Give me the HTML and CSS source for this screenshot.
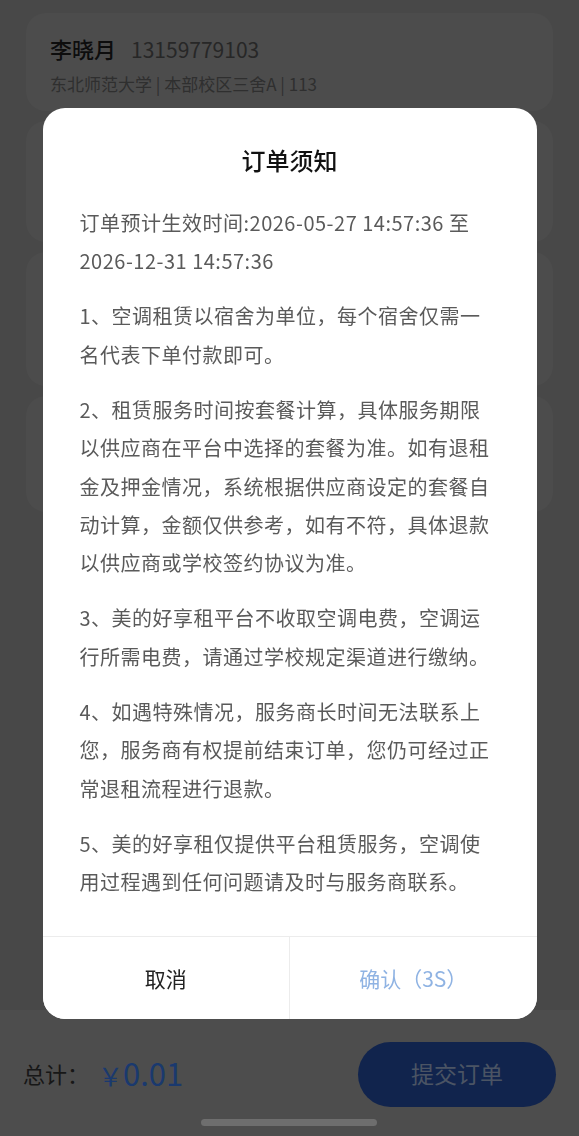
FILE: index.html
```html
<!DOCTYPE html>
<html lang="zh-CN">
<head>
<meta charset="utf-8">
<title>订单须知</title>
<link rel="stylesheet" href="styles.css">
</head>
<body>
<div class="page">
  <div class="content">
    <div class="card info">
      <div class="info-row">
        <span class="name">李晓月</span>
        <span class="phone">13159779103</span>
      </div>
      <div class="address">东北师范大学 | 本部校区三舍A | 113</div>
    </div>
    <div class="card ghost g1"></div>
    <div class="card ghost g2"></div>
    <div class="card ghost g3"></div>
  </div>
  <div class="bottom-bar">
    <div class="total">
      <span class="total-label">总计：</span>
      <span class="price"><span class="yen">￥</span>0.01</span>
    </div>
    <button class="submit">提交订单</button>
  </div>
</div>

<div class="mask">
  <div class="dialog">
    <div class="dialog-body">
      <h2 class="dialog-title">订单须知</h2>
      <div class="notice">
        <p>订单预计生效时间:2026-05-27 14:57:36 至 2026-12-31 14:57:36</p>
        <p>1、空调租赁以宿舍为单位，每个宿舍仅需一名代表下单付款即可。</p>
        <p>2、租赁服务时间按套餐计算，具体服务期限以供应商在平台中选择的套餐为准。如有退租金及押金情况，系统根据供应商设定的套餐自动计算，金额仅供参考，如有不符，具体退款以供应商或学校签约协议为准。</p>
        <p>3、美的好享租平台不收取空调电费，空调运行所需电费，请通过学校规定渠道进行缴纳。</p>
        <p>4、如遇特殊情况，服务商长时间无法联系上您，服务商有权提前结束订单，您仍可经过正常退租流程进行退款。</p>
        <p>5、美的好享租仅提供平台租赁服务，空调使用过程遇到任何问题请及时与服务商联系。</p>
      </div>
    </div>
    <div class="dialog-footer">
      <button class="dlg-btn cancel">取消</button>
      <button class="dlg-btn confirm">确认（3S）</button>
    </div>
  </div>
</div>

<div class="home-indicator"></div>
</body>
</html>
```

FILE: styles.css
```css
html, body {
  margin: 0;
  padding: 0;
}
body {
  width: 579px;
  height: 1136px;
  overflow: hidden;
  background: #909090;
  font-family: "Noto Sans CJK SC", "Noto Sans", sans-serif;
  position: relative;
}
.page {
  display: flex;
  flex-direction: column;
  height: 1136px;
}
.content {
  flex: 1;
  display: flex;
  flex-direction: column;
  gap: 10px;
  padding: 13px 26px 0;
}
.card {
  background: #989898;
  border-radius: 20px;
}
.info {
  padding: 20px 24px 15px;
}
.info-row {
  display: flex;
  align-items: baseline;
  gap: 15px;
  line-height: 30px;
}
.name {
  font-size: 22px;
  font-weight: 500;
  color: #1a1a1a;
}
.phone {
  font-size: 21px;
  color: #4e4e4e;
}
.address {
  margin-top: 8px;
  font-size: 17px;
  line-height: 24px;
  color: #5e5e5e;
}
.g1 { height: 121px; }
.g2 { height: 134px; }
.g3 { height: 116px; }

.bottom-bar {
  background: #9a9a9a;
  height: 126px;
  box-sizing: border-box;
  padding: 32px 23px 29px;
  display: flex;
  align-items: center;
  justify-content: space-between;
}
.total {
  display: flex;
  align-items: center;
  margin-top: -4px;
}
.total-label {
  font-size: 22px;
  line-height: 1;
  color: #2e2e2e;
}
.price {
  margin-left: 9px;
  font-size: 31px;
  line-height: 1;
  color: #3572dc;
}
.yen {
  font-size: 25px;
}
.submit {
  width: 198px;
  height: 65px;
  border: none;
  border-radius: 33px;
  background: #22489a;
  color: #96a8c8;
  font-family: inherit;
  font-size: 23px;
  padding: 0 0 4px;
}

.mask {
  position: fixed;
  inset: 0;
  background: rgba(0, 0, 0, 0.5);
  display: flex;
  justify-content: center;
  align-items: flex-start;
  padding-top: 108px;
}
.dialog {
  width: 494px;
  background: #fff;
  border-radius: 22px;
  overflow: hidden;
}
.dialog-body {
  padding: 37px 42px 35px 37px;
}
.dialog-title {
  margin: 0;
  text-align: center;
  font-size: 24px;
  line-height: 30px;
  font-weight: 500;
  color: #111;
  padding-left: 5px;
}
.notice {
  margin-top: 29px;
}
.notice p {
  margin: 16.6px 0 0;
  font-size: 20px;
  line-height: 38.4px;
  letter-spacing: 0.5px;
  color: #5a5a5a;
}
.notice p:first-child {
  margin-top: 0;
}
.dialog-footer {
  display: flex;
  border-top: 1px solid #ececec;
  height: 82px;
}
.dlg-btn {
  flex: 1;
  border: none;
  background: #fff;
  font-family: inherit;
  font-size: 21px;
  padding: 0;
}
.cancel {
  color: #222;
}
.confirm {
  color: #8fb3e3;
  border-left: 1px solid #ececec;
}
.home-indicator {
  position: fixed;
  left: 201px;
  bottom: 10px;
  width: 176px;
  height: 7px;
  border-radius: 4px;
  background: #6e6e6e;
}
```
